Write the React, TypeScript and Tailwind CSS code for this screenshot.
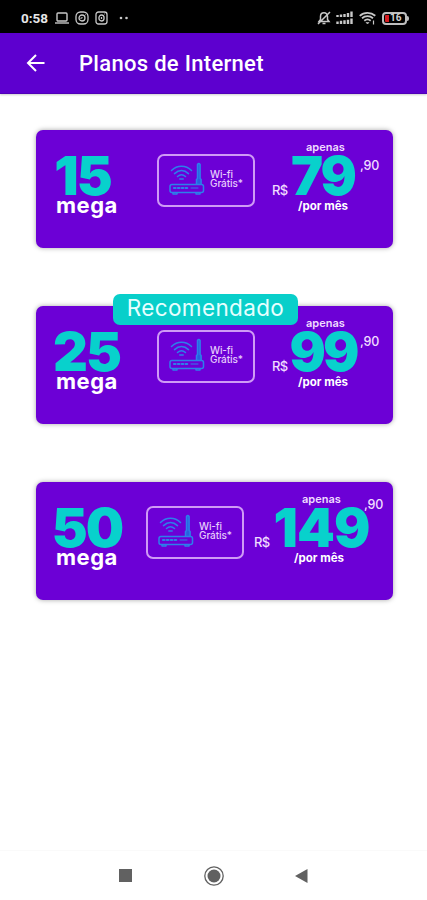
import React from "react";

type Plan = {
  speed: string;
  speedClass: string;
  price: string;
  priceClass: string;
  digitsClass: string;
  wifiClass: string;
  currencyClass: string;
  apenasClass: string;
  perMonthClass: string;
  centsClass: string;
  recommended?: boolean;
};

const plans: Plan[] = [
  {
    speed: "15",
    speedClass: "w-[61px] tracking-[-2px]",
    price: "79",
    priceClass: "w-[66px]",
    digitsClass: "tracking-[-2px]",
    wifiClass: "ml-[37px]",
    currencyClass: "ml-[17px]",
    apenasClass: "ml-[16px]",
    perMonthClass: "ml-[8px]",
    centsClass: "ml-[4px] mt-[27px]",
  },
  {
    speed: "25",
    speedClass: "w-[69px] tracking-[-2px]",
    price: "99",
    priceClass: "w-[66px]",
    digitsClass: "tracking-[-3px]",
    wifiClass: "ml-[37px]",
    currencyClass: "ml-[17px]",
    apenasClass: "ml-[16px]",
    perMonthClass: "ml-[8px]",
    centsClass: "ml-[4px] mt-[27px]",
    recommended: true,
  },
  {
    speed: "50",
    speedClass: "w-[70px] tracking-[-2px]",
    price: "149",
    priceClass: "w-[99px]",
    digitsClass: "tracking-[-1px]",
    wifiClass: "ml-[26px]",
    currencyClass: "ml-[10px]",
    apenasClass: "ml-[30px]",
    perMonthClass: "ml-[22px]",
    centsClass: "-ml-[7px] mt-[14px]",
  },
];

function Router() {
  return (
    <svg width="36" height="33" viewBox="0 0 36 33" fill="none" stroke="#2c80ea" strokeWidth="1.5" strokeLinecap="round" strokeLinejoin="round">
      <path d="M2.5 8.500c5.800-5.700 14.200-5.700 20 0M5.500 11.600c4.300-4 9.700-4 14 0M8.500 14.500c2.500-2.200 5.500-2.200 8 0M10.800 17h3.400" />
      <path d="M27.500 22V17.500l1-1V2.500q1.300-2 2.600 0v14l1 1V22" fill="#2860df" />
      <rect x="1" y="22.500" width="33.500" height="8" rx="2" />
      <path d="M4 30.800v1.200h4v-1.200M27 30.800v1.200h4v-1.200" />
      <path d="M5 26h14" strokeWidth="2.200" strokeDasharray="1.500 2.400" />
      <path d="M22 26h7" strokeWidth="1" />
    </svg>
  );
}

function PlanCard({ plan }: { plan: Plan }) {
  return (
    <section className="relative flex h-[118px] w-[357px] items-start rounded-[7px] bg-[#6c00d6] pl-4 text-white shadow-[0_0_5px_rgba(0,0,0,0.35)]">
      {plan.recommended && (
        <div className="absolute -top-3 left-[77px] flex h-[31px] w-[185px] items-center justify-center rounded-[7px] bg-[#08cfca] pb-[3px] text-[22.5px] tracking-[0.35px] text-[#e6ffff]">
          Recomendado
        </div>
      )}
      <div className="w-[68px] shrink-0 pt-[20px]">
        <div className={`${plan.speedClass} flex h-[52px] justify-center whitespace-nowrap text-[54px] font-black leading-[52px] text-[#08d1cc]`}>
          {plan.speed}
        </div>
        <div className="ml-1 -mt-[9px] h-6 whitespace-nowrap text-[22px] font-bold leading-6 tracking-[0.5px]">mega</div>
      </div>
      <div className={`${plan.wifiClass} mt-[24px] flex h-[53px] w-[98px] shrink-0 items-start rounded-[7px] border-2 border-[#cf9bf5] pl-[10px] pt-[6px]`}>
        <Router />
        <div className="ml-[5px] mt-[8px] whitespace-nowrap text-[10px] font-medium leading-[9px] tracking-[-0.1px] text-[#e6cdfb]">
          Wi-fi
          <br />
          Grátis*
        </div>
      </div>
      <div className={`${plan.currencyClass} mt-[52px] w-[18px] shrink-0 whitespace-nowrap text-[13px] font-medium leading-4 tracking-[-0.6px] text-[#f0dcff]`}>R$</div>
      <div className={`${plan.priceClass} shrink-0 pt-[11px]`}>
        <div className={`${plan.apenasClass} h-3 whitespace-nowrap text-[11px] font-semibold leading-3 text-[#f0dcff]`}>apenas</div>
        <div className={`${plan.digitsClass} -mt-[3px] flex h-[52px] justify-center whitespace-nowrap text-[54px] font-black leading-[52px] text-[#08d1cc]`}>
          {plan.price}
        </div>
        <div className={`${plan.perMonthClass} -mt-[3px] h-3.5 whitespace-nowrap text-[11.5px] font-bold leading-3.5`}>/por mês</div>
      </div>
      <div className={`${plan.centsClass} whitespace-nowrap text-[12.5px] font-medium leading-[18px] tracking-[-0.2px] text-[#f0dcff]`}>,90</div>
    </section>
  );
}

function StatusBar() {
  return (
    <div className="flex h-[33px] items-center justify-between bg-black pl-[21px] pr-[18px] pt-[3px] font-['Roboto',sans-serif] text-[#c8c8c8]">
      <div className="flex items-center">
        <span className="w-[27px] text-[13.5px] font-bold leading-4 text-[#e6e6e6]">0:58</span>
        <svg className="ml-[7px]" width="14" height="12" viewBox="0 0 14 12" fill="none" stroke="currentColor" strokeWidth="1.4">
          <rect x="2" y="1" width="10" height="8" rx="1" />
          <path d="M0 11h14" />
        </svg>
        <svg className="ml-[6px]" width="14" height="14" viewBox="0 0 14 14" fill="none" stroke="currentColor" strokeWidth="1.3">
          <rect x="1" y="1" width="12" height="12" rx="4.5" />
          <circle cx="7" cy="7" r="3" />
          <path d="M10 3.500h.5M5.500 7.500l2-1" />
        </svg>
        <svg className="ml-[6px]" width="13" height="14" viewBox="0 0 13 14" fill="none" stroke="currentColor" strokeWidth="1.3">
          <rect x="1" y="1" width="11" height="12" rx="2.5" />
          <ellipse cx="6.5" cy="7" rx="2.6" ry="3" />
          <path d="M9 3h.5M6.500 6v2" />
        </svg>
        <svg className="ml-[11px]" width="11" height="4" fill="currentColor">
          <circle cx="2" cy="2" r="1.3" />
          <circle cx="7.5" cy="2" r="1.3" />
        </svg>
      </div>
      <div className="flex items-center">
        <svg width="14" height="14" viewBox="0 0 14 14" fill="none" stroke="currentColor" strokeWidth="1.5">
          <path d="M2 10.500h10L10.500 8.500V5.500C10.500 3 9 1.800 7 1.800S3.500 3 3.500 5.500v3zM5.500 12.500h3M1 13L13 1" />
        </svg>
        <svg className="ml-[5px]" width="17" height="14" viewBox="0 0 17 14" stroke="currentColor" strokeWidth="2.4">
          <path d="M1.500 6V4M5 6V3.500M8.500 6V3M12 6V2M15.500 6V0.500M1.500 13v-2.500M5 13V9.800M8.500 13V9.300M12 13V8.700M15.500 13V7.500" />
        </svg>
        <svg className="ml-[6px]" width="17" height="14" viewBox="0 0 17 14" fill="none" stroke="currentColor" strokeWidth="1.8">
          <path d="M.7 4.800c4.500-4 11-4 15.600 0M3 7.300c3.200-2.800 7.800-2.800 11 0M5.300 9.700c2-1.600 4.400-1.600 6.400 0" />
          <path d="M7 11.500h3L8.500 13z" fill="currentColor" strokeWidth=".6" />
          <path d="M14.500 9.500v4" strokeWidth="1.2" />
        </svg>
        <div className="ml-[6px] flex h-[13px] w-[25px] items-center rounded-[4px] border-2 border-[#bdbdbd] p-px">
          <span className="h-[7px] w-[4px] rounded-l-[1px] bg-[#d51c20]" />
          <span className="ml-px text-[10px] font-bold leading-[10px] text-[#d0d0d0]">16</span>
        </div>
        <span className="h-[5px] w-[2px] rounded-r-sm bg-[#bdbdbd]" />
      </div>
    </div>
  );
}

export default function App() {
  return (
    <main className="flex h-[900px] w-[427px] flex-col overflow-hidden bg-white font-['Inter',sans-serif]">
      <StatusBar />
      <header className="flex h-[61px] shrink-0 items-center border-b border-[#5000b8] bg-[#5d00cf] pl-[26px] text-white shadow-[0_1px_2px_rgba(0,0,0,0.2)]">
        <svg width="19" height="18" viewBox="0 0 19 18" fill="none" stroke="currentColor" strokeWidth="2">
          <path d="M18.500 9H2M10 1L2 9l8 8" />
        </svg>
        <h1 className="ml-[34px] mt-[2px] whitespace-nowrap font-['Roboto',sans-serif] text-[22px] font-medium leading-7 tracking-[0.3px]">Planos de Internet</h1>
      </header>
      <div className="flex flex-1 flex-col gap-[58px] pl-[36px] pt-[36px]">
        {plans.map((plan) => (
          <PlanCard key={plan.speed} plan={plan} />
        ))}
      </div>
      <nav className="flex h-[50px] shrink-0 items-center border-t border-[#fafafa] pl-[119px] text-[#616161]">
        <span className="h-[13px] w-[13px] bg-[#616161]" />
        <svg className="ml-[72px]" width="20" height="20" viewBox="0 0 20 20">
          <circle cx="10" cy="10" r="9.2" fill="none" stroke="currentColor" strokeWidth="1.3" />
          <circle cx="10" cy="10" r="6.5" fill="currentColor" />
        </svg>
        <svg className="ml-[71px]" width="13" height="14" viewBox="0 0 13 14">
          <path d="M0 7L12.500 0v14z" fill="currentColor" />
        </svg>
      </nav>
    </main>
  );
}
